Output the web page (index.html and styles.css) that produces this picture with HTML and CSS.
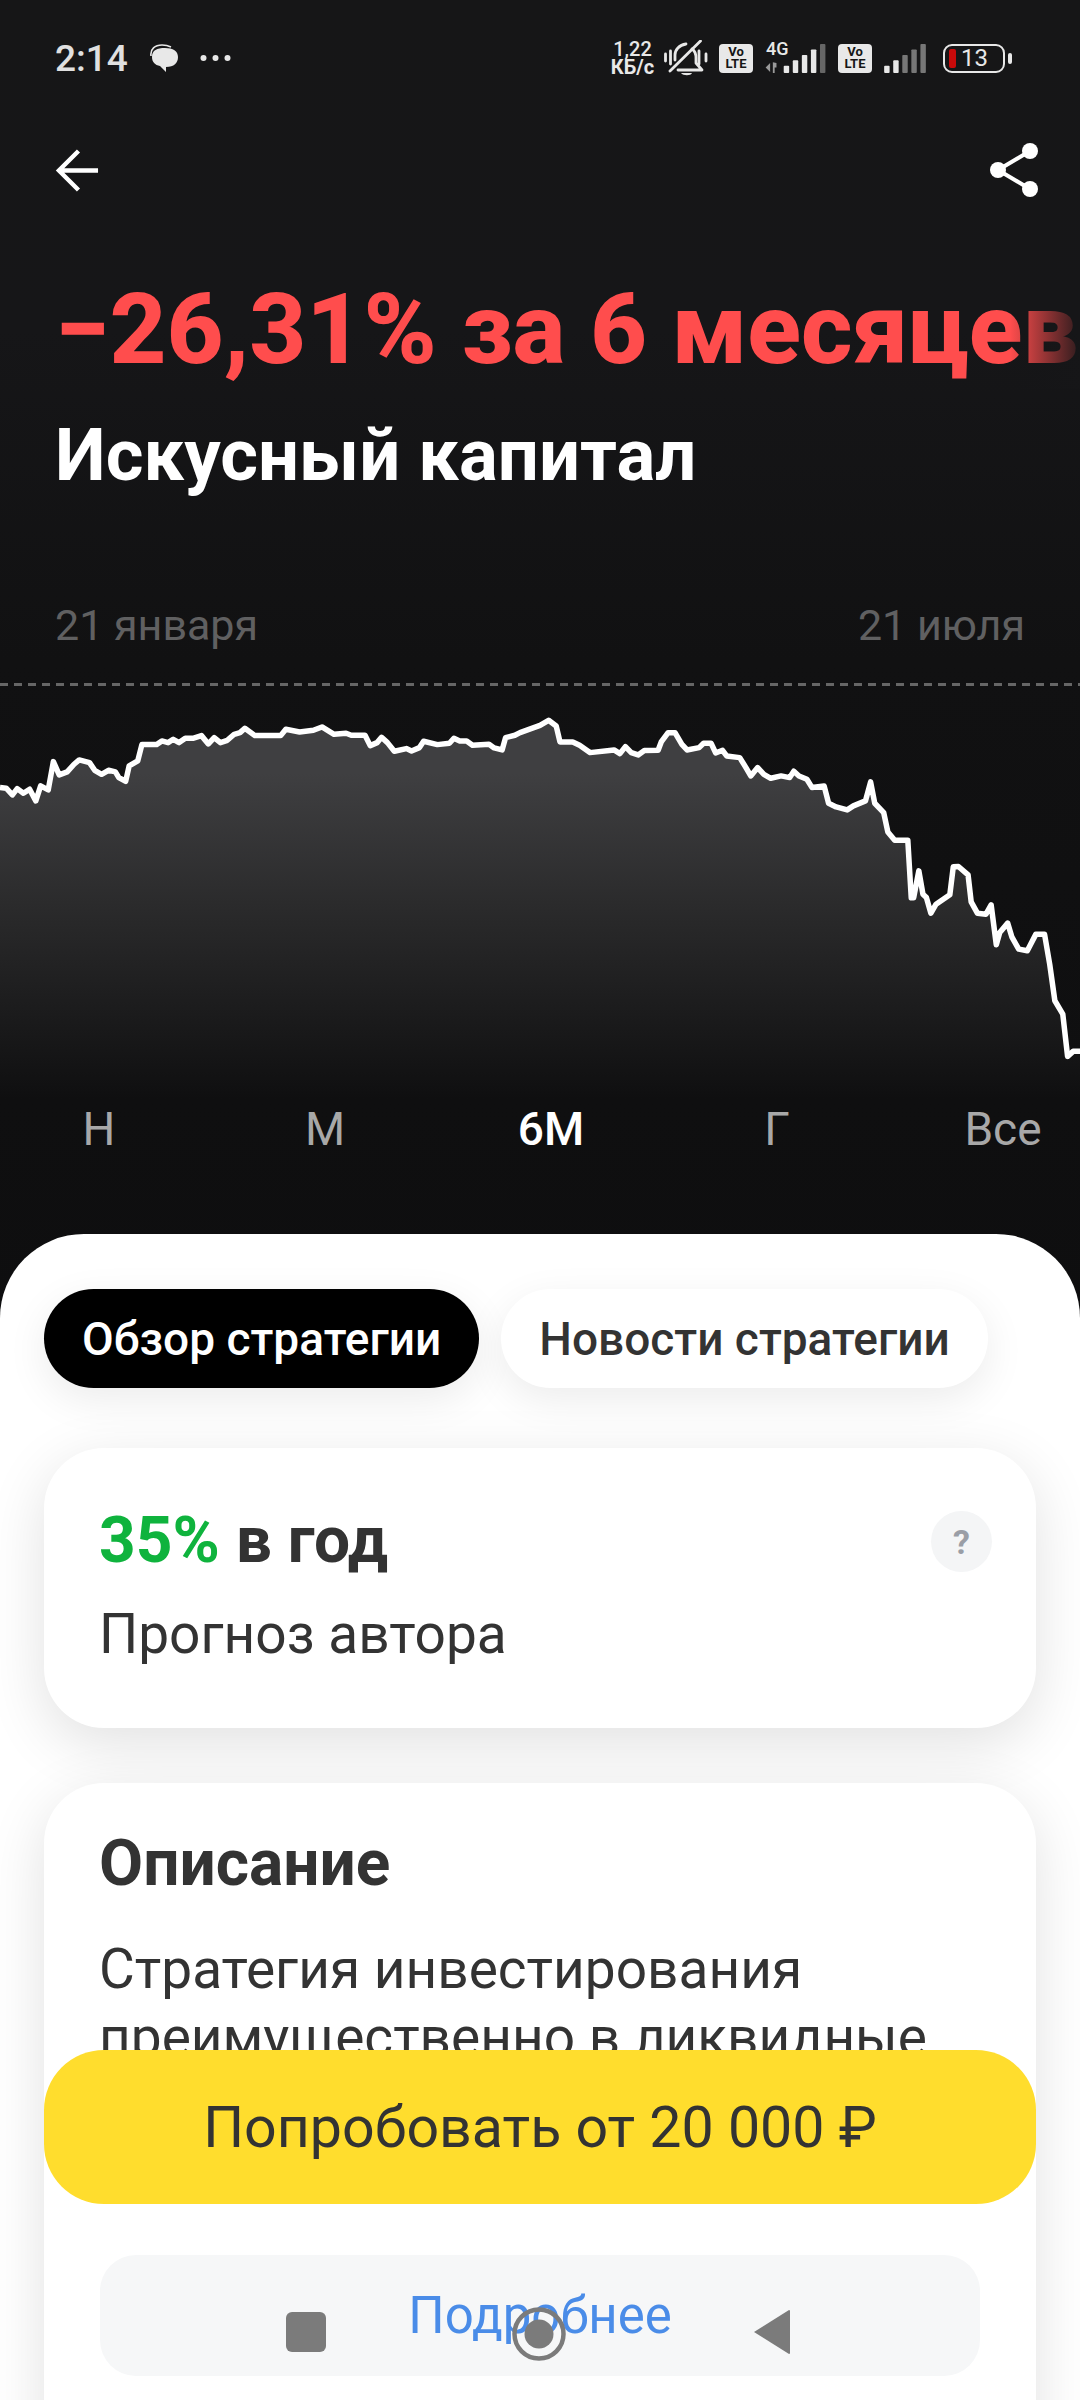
FILE: index.html
```html
<!DOCTYPE html>
<html lang="ru">
<head>
<meta charset="utf-8">
<title>Искусный капитал</title>
<link rel="stylesheet" href="styles.css">
</head>
<body>
<div class="screen">
  <header class="hero">
    <div class="status">
      <div class="status-left">
        <span class="time">2:14</span>
        <svg class="ic-msg" viewBox="0 0 28 29"><path d="M1 12C0 5 5 1 12 1c4 0 7 1 9 2" fill="none" stroke="#e8e8e8" stroke-width="1.6"/><path d="M2 13C2 6 7 4 15 4s13 3 13 9c0 6-4 10-12 10v5l-6-6c-5-1-8-4-8-9z" fill="#e8e8e8"/></svg>
        <svg class="ic-dots" viewBox="0 0 31 8"><circle cx="3.5" cy="4" r="3" fill="#e8e8e8"/><circle cx="15.5" cy="4" r="3" fill="#e8e8e8"/><circle cx="27.5" cy="4" r="3" fill="#e8e8e8"/></svg>
      </div>
      <div class="status-right">
        <div class="speed"><span>1,22</span><span class="speed-unit">КБ/с</span></div>
        <svg class="ic-bell" viewBox="0 0 44 37"><g fill="none" stroke="#e8e8e8" stroke-width="2.8" stroke-linecap="round" stroke-linejoin="round"><path d="M11 20v-5c0-5 4-10 11-11"/><path d="M28 9c3 2 4 5 4 9v5l6 7H14"/><path d="M6 31 36.500 1"/><path d="M1.500 14v7M6.500 11v13M35 11v13M42 14v7"/></g><path d="M17 33h11c-1 3-9 3-11 0z" fill="#e8e8e8"/></svg>
        <div class="volte"><span>Vo</span><span>LTE</span></div>
        <div class="sig-4g">
          <span class="g4">4G</span>
          <svg class="ic-sig1" viewBox="0 0 66 32"><path d="M0 26l5-5v10zM8 20l4 1v5H10v6H8z" fill="#9a9a9a"/><g fill="#e8e8e8"><rect x="20" y="24" width="6" height="8" rx="1"/><rect x="30" y="18" width="6" height="14" rx="1"/><rect x="40" y="12" width="6" height="20" rx="1"/><rect x="50" y="6" width="6" height="26" rx="1"/></g><rect x="60" y="0" width="6" height="32" rx="1" fill="#666"/></svg>
        </div>
        <div class="volte volte-2"><span>Vo</span><span>LTE</span></div>
        <svg class="ic-sig2" viewBox="0 0 46 32"><g fill="#e8e8e8"><rect x="0" y="24" width="6" height="8" rx="1"/><rect x="10" y="18" width="6" height="14" rx="1"/></g><g fill="#777"><rect x="20" y="12" width="6" height="20" rx="1"/><rect x="30" y="6" width="6" height="26" rx="1"/><rect x="40" y="0" width="6" height="32" rx="1"/></g></svg>
        <div class="battery"><div class="batt-body"><i class="batt-fill"></i><span>13</span></div><i class="batt-cap"></i></div>
      </div>
    </div>
    <nav class="toolbar">
      <svg class="ic-back" viewBox="0 0 46 46"><path d="M44 23H4M24 3 4 23l20 20" fill="none" stroke="#fff" stroke-width="4.500"/></svg>
      <svg class="ic-share" viewBox="0 0 50 54"><path d="M41 8 9 27l32 19" fill="none" stroke="#fff" stroke-width="4"/><circle cx="41" cy="8" r="8" fill="#fff"/><circle cx="9" cy="27" r="8" fill="#fff"/><circle cx="41" cy="46" r="8" fill="#fff"/></svg>
    </nav>
    <div class="headline-wrap"><h1 class="headline">−26,31% за 6 месяцев</h1></div>
    <h2 class="title">Искусный капитал</h2>
    <div class="dates"><span>21 января</span><span>21 июля</span></div>
    <div class="dash"></div>
    <svg class="chart" viewBox="0 0 3136 1255" preserveAspectRatio="none">
      <defs><linearGradient id="area" x1="0" y1="0" x2="0" y2="1"><stop offset="0.14" stop-color="#3f3f41"/><stop offset="0.5" stop-color="#2a2a2b"/><stop offset="1" stop-color="#0f0f10"/></linearGradient></defs>
      <path class="area" d="M0 320L18 322L36 342L50 323L68 337L86 325L104 360L118 315L140 327L155 242L172 282L195 273L215 250L230 237L260 245L275 268L295 280L315 268L335 273L345 290L365 301L375 255L400 240L412 191L455 191L470 180L488 185L503 175L520 185L538 172L560 172L585 164L605 189L622 170L640 185L660 178L680 160L697 155L711 142L740 164L815 164L830 145L870 153L910 148L935 138L970 160L1005 157L1020 163L1060 163L1075 194L1095 185L1108 169L1125 185L1145 211L1180 203L1195 210L1218 200L1230 181L1270 191L1305 187L1318 172L1335 180L1355 180L1372 193L1420 190L1435 201L1458 207L1468 170L1495 163L1510 155L1568 133L1593 118L1615 135L1626 183L1663 183L1683 193L1713 215L1783 207L1800 218L1816 197L1833 215L1853 222L1871 209L1911 208L1920 183L1940 155L1960 155L1980 190L1995 207L2030 200L2043 187L2065 187L2078 216L2098 208L2110 225L2148 230L2166 260L2180 285L2200 260L2218 280L2238 292L2268 285L2293 290L2305 271L2320 285L2343 295L2358 320L2393 315L2406 367L2428 378L2460 387L2478 375L2513 360L2528 303L2540 367L2566 395L2578 453L2598 478L2636 478L2646 651L2653 651L2668 570L2680 640L2690 650L2703 697L2718 670L2758 642L2768 558L2783 557L2811 582L2820 663L2838 697L2863 700L2878 672L2893 792L2903 755L2926 727L2938 768L2958 805L2983 810L3008 760L3033 760L3048 850L3063 960L3086 1000L3100 1127L3116 1112L3136 1112V1255H0Z" fill="url(#area)"/>
      <path class="line" d="M0 320L18 322L36 342L50 323L68 337L86 325L104 360L118 315L140 327L155 242L172 282L195 273L215 250L230 237L260 245L275 268L295 280L315 268L335 273L345 290L365 301L375 255L400 240L412 191L455 191L470 180L488 185L503 175L520 185L538 172L560 172L585 164L605 189L622 170L640 185L660 178L680 160L697 155L711 142L740 164L815 164L830 145L870 153L910 148L935 138L970 160L1005 157L1020 163L1060 163L1075 194L1095 185L1108 169L1125 185L1145 211L1180 203L1195 210L1218 200L1230 181L1270 191L1305 187L1318 172L1335 180L1355 180L1372 193L1420 190L1435 201L1458 207L1468 170L1495 163L1510 155L1568 133L1593 118L1615 135L1626 183L1663 183L1683 193L1713 215L1783 207L1800 218L1816 197L1833 215L1853 222L1871 209L1911 208L1920 183L1940 155L1960 155L1980 190L1995 207L2030 200L2043 187L2065 187L2078 216L2098 208L2110 225L2148 230L2166 260L2180 285L2200 260L2218 280L2238 292L2268 285L2293 290L2305 271L2320 285L2343 295L2358 320L2393 315L2406 367L2428 378L2460 387L2478 375L2513 360L2528 303L2540 367L2566 395L2578 453L2598 478L2636 478L2646 651L2653 651L2668 570L2680 640L2690 650L2703 697L2718 670L2758 642L2768 558L2783 557L2811 582L2820 663L2838 697L2863 700L2878 672L2893 792L2903 755L2926 727L2938 768L2958 805L2983 810L3008 760L3033 760L3048 850L3063 960L3086 1000L3100 1127L3116 1112L3136 1112"/>
    </svg>
    <div class="periods"><span>Н</span><span>М</span><span class="on">6М</span><span>Г</span><span>Все</span></div>
  </header>
  <main class="sheet">
    <div class="tabs">
      <button class="tab tab-on">Обзор стратегии</button>
      <button class="tab">Новости стратегии</button>
    </div>
    <section class="card card-forecast">
      <div class="forecast-text">
        <div class="rate"><span class="green">35%</span> в год</div>
        <div class="rate-sub">Прогноз автора</div>
      </div>
      <span class="help">?</span>
    </section>
    <section class="card card-desc">
      <h3>Описание</h3>
      <p>Стратегия инвестирования преимущественно в ликвидные</p>
      <div class="more">Подробнее</div>
    </section>
  </main>
  <button class="cta">Попробовать от 20 000 ₽</button>
  <div class="navbar">
    <i class="nav-square"></i>
    <svg class="nav-home" viewBox="0 0 54 54"><circle cx="27" cy="27" r="24.500" fill="none" stroke="#7b7b7b" stroke-width="4.500"/><circle cx="27" cy="27" r="14.500" fill="#7b7b7b"/></svg>
    <svg class="nav-back" viewBox="0 0 38 46"><path d="M36 1 1 23l35 22a1 1 0 0 0 1-1V2a1 1 0 0 0-1-1z" fill="#7b7b7b"/></svg>
  </div>
</div>
</body>
</html>
```

FILE: styles.css
```css
* { box-sizing: border-box; }
html, body { margin: 0; padding: 0; }
body { font-family: Roboto, "Noto Sans", sans-serif; background: #0f0f10; }
.screen { position: relative; width: 1080px; height: 2400px; overflow: hidden; background: #fff; }

.hero { height: 1320px; margin-bottom: -86px; background: linear-gradient(180deg, #161617 0, #161618 25%, #111112 50%, #0e0e0f 100%); color: #fff; }

.status { display: flex; justify-content: space-between; align-items: center; height: 83px; padding: 33px 68px 0 55px; }
.status-left { display: flex; align-items: center; }
.time { width: 95px; font-size: 37px; font-weight: 500; color: #e0e0e0; }
.ic-msg { width: 28px; height: 29px; }
.ic-dots { width: 31px; height: 8px; margin-left: 22px; }
.status-right { display: flex; align-items: center; color: #e8e8e8; }
.speed { display: flex; flex-direction: column; align-items: center; width: 41px; font-size: 20px; font-weight: 500; line-height: 18px; white-space: nowrap; }
.speed-unit { font-weight: 700; }
.ic-bell { width: 44px; height: 37px; margin-left: 11px; }
.volte { display: flex; flex-direction: column; align-items: center; justify-content: center; width: 34px; height: 29px; margin-left: 11px; border-radius: 4px; background: #e8e8e8; color: #151515; font-size: 13px; font-weight: 700; line-height: 12px; }
.volte-2 { margin-left: 9px; }
.sig-4g { position: relative; width: 67px; height: 29px; margin-left: 9px; }
.g4 { position: absolute; left: 4px; top: -4px; font-size: 18px; font-weight: 500; line-height: 18px; }
.ic-sig1 { display: block; width: 67px; height: 29px; }
.ic-sig2 { width: 46px; height: 29px; margin-left: 10px; }
.battery { display: flex; align-items: center; margin-left: 15px; }
.batt-body { display: flex; align-items: center; width: 62px; height: 29px; padding-left: 4px; border: 2.5px solid #e8e8e8; border-radius: 9px; }
.batt-fill { width: 7px; height: 19px; background: #c80a0a; border-radius: 2px; }
.batt-body span { margin-left: 5px; font-size: 24px; line-height: 24px; color: #e8e8e8; }
.batt-cap { width: 4px; height: 11px; margin-left: 3px; background: #e8e8e8; border-radius: 2px; }

.toolbar { display: flex; justify-content: space-between; align-items: center; height: 60px; margin-top: 57px; padding: 0 41px 0 55px; }
.ic-back { width: 45px; height: 45px; }
.ic-share { width: 50px; height: 54px; }

.headline-wrap { position: relative; margin-top: 69px; overflow: hidden; white-space: nowrap; }
.headline-wrap::after { content: ""; position: absolute; top: 0; right: 0; bottom: 0; width: 70px; background: linear-gradient(90deg, rgba(22,22,24,0), rgba(22,22,24,.9)); }
.headline { margin: 0 0 0 55px; font-size: 99px; line-height: 120px; font-weight: 800; color: #ff4d4d; }
.title { margin: 25px 0 0 55px; font-size: 72.5px; line-height: 84px; font-weight: 700; color: #fff; }

.dates { display: flex; justify-content: space-between; margin-top: 102px; padding: 0 55px; font-size: 43px; line-height: 50px; color: #606061; }
.dash { height: 3px; margin-top: 33px; background: repeating-linear-gradient(90deg, #666 0 8px, transparent 8px 14px); }
.chart { display: block; width: 1080px; height: 418px; margin-top: -5px; }
.chart .area { stroke: none; }
.chart .line { fill: none; stroke: #fff; stroke-width: 5.5px; stroke-linejoin: round; vector-effect: non-scaling-stroke; }
.periods { display: grid; grid-template-columns: repeat(5, 226px); margin: 3px 0 0 -14px; font-size: 46px; line-height: 54px; color: #a8a8a8; text-align: center; }
.periods .on { color: #fff; font-weight: 500; }

.sheet { position: relative; height: 1166px; padding: 55px 44px 0; background: #fff; border-radius: 84px 84px 0 0; }
.tabs { display: flex; gap: 22px; }
.tab { height: 99px; padding: 0 38px; border: 0; border-radius: 50px; background: #fff; color: #333; font: 500 46px Roboto, sans-serif; box-shadow: 0 12px 40px rgba(0,0,0,.08); white-space: nowrap; }
.tab-on { background: #000; color: #fff; }
.card { background: #fff; border-radius: 60px; box-shadow: 0 16px 60px rgba(0,0,0,.12); }
.card-forecast { display: flex; justify-content: space-between; height: 280px; margin-top: 60px; padding: 55px 44px 0 55px; }
.rate { font-size: 64px; line-height: 76px; font-weight: 700; color: #333; }
.green { color: #0fb33d; }
.rate-sub { margin-top: 23px; font-size: 55px; line-height: 64px; color: #333; }
.help { display: flex; align-items: center; justify-content: center; width: 61px; height: 61px; margin-top: 8px; border-radius: 50%; background: #f4f5f6; color: #9a9ea6; font-size: 34px; font-weight: 700; }
.card-desc { height: 800px; margin-top: 55px; padding: 43px 55px; }
.card-desc h3 { margin: 0; font-size: 64px; line-height: 76px; font-weight: 700; color: #333; }
.card-desc p { height: 320px; margin: 33px 0 0; font-size: 55px; line-height: 68px; color: #333; }
.more { display: flex; justify-content: center; align-items: center; width: 880px; height: 121px; margin-left: 1px; border-radius: 36px; background: #f6f7f8; color: #4a8ce8; font-size: 51px; }

.cta { position: absolute; left: 44px; top: 2050px; width: 992px; height: 154px; border: 0; border-radius: 60px; background: #ffdd2d; color: #333; font: 400 57.3px Roboto, sans-serif; }
.navbar { position: absolute; left: 0; top: 2306px; width: 1080px; height: 56px; }
.nav-square { position: absolute; left: 286px; top: 6px; width: 40px; height: 40px; border-radius: 6px; background: #7b7b7b; }
.nav-home { position: absolute; left: 512px; top: 1px; width: 54px; height: 54px; }
.nav-back { position: absolute; left: 753px; top: 3px; width: 38px; height: 46px; }
```
